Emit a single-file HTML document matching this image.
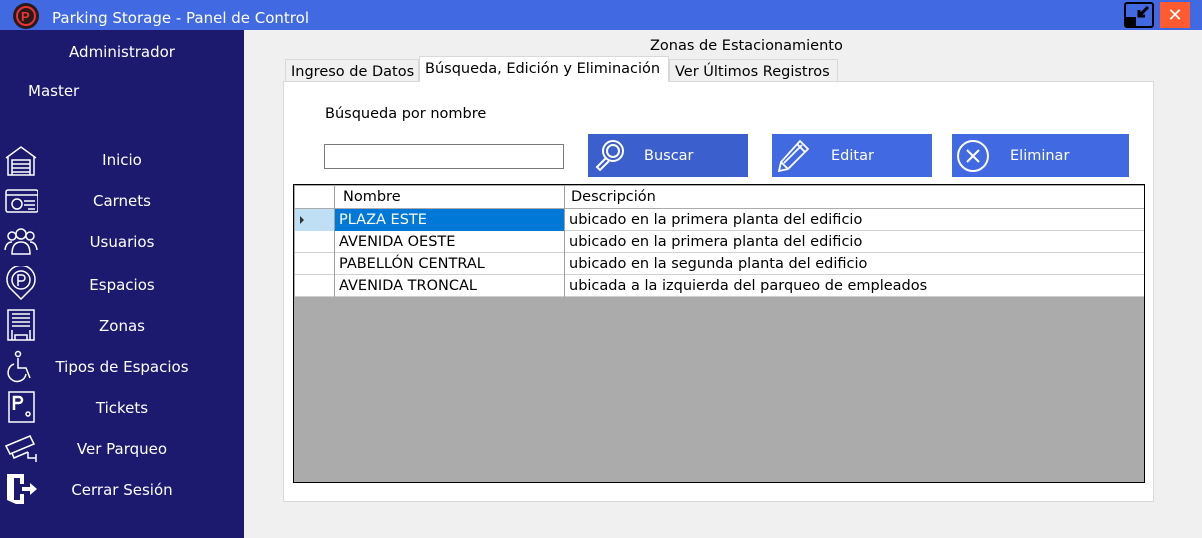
<!DOCTYPE html>
<html><head><meta charset="utf-8"><style>
*{margin:0;padding:0;box-sizing:border-box}
body{width:1202px;height:538px;overflow:hidden;background:#f0f0f0;font-family:"Liberation Sans","DejaVu Sans",sans-serif;position:relative}
.abs{position:absolute;white-space:nowrap}
#title{left:0;top:0;width:1202px;height:30px;background:#4169e1}
#side{left:0;top:30px;width:244px;height:508px;background:#1b1a6e}
.nav{position:absolute;left:0;width:244px;text-align:center;color:#fff;font-size:15px;font-family:"DejaVu Sans",sans-serif}
.ico{position:absolute;left:4px;width:34px;height:34px}
.tab{position:absolute;white-space:nowrap;height:24px;border:1px solid #d9d9d9;background:#f0f0f0;font-family:"DejaVu Sans",sans-serif;font-size:14.5px;padding:4px 0 0 5px;color:#000}
.btn{position:absolute;top:134px;height:43px;background:#4169e1;color:#fff;font-family:"DejaVu Sans",sans-serif;font-size:14.5px}
.btn span{position:absolute;top:14px}
.row{position:absolute;left:295px;width:849px;height:22px;background:#fff;border-bottom:1px solid #d0d0d0;font-family:"DejaVu Sans",sans-serif;font-size:14.5px;white-space:nowrap}
.row div{position:absolute;top:3px}
</style></head><body>
<div id="title" class="abs">
 <svg class="abs" style="left:12px;top:2px" width="28" height="28" viewBox="0 0 28 28"><circle cx="14" cy="14" r="13" fill="#2a1a1a"/><circle cx="14" cy="14" r="9" fill="none" stroke="#e33" stroke-width="2"/><text x="9" y="19" fill="#e33" font-size="13" font-family="Liberation Sans" font-weight="bold">P</text></svg>
 <div class="abs" style="left:52px;top:9px;color:#fff;font-size:15px;font-family:'DejaVu Sans',sans-serif">Parking Storage - Panel de Control</div>
 <div class="abs" style="left:1124px;top:2px;width:30px;height:26px;border:2px solid #000;border-radius:3px;background:#4169e1"><div class="abs" style="left:0;bottom:0;width:10px;height:9px;background:#000"></div><svg class="abs" style="left:10px;top:2px" width="14" height="14"><path d="M12 1 L4 9 M3 4 V10 H9" stroke="#000" stroke-width="3" fill="none"/></svg></div>
 <div class="abs" style="left:1160px;top:2px;width:30px;height:26px;background:#ff5a30;color:#fff;font-size:18px;font-weight:bold;text-align:center;line-height:26px">✕</div>
</div>
<div id="side" class="abs"></div>
<div class="nav" style="top:43px">Administrador</div>
<div class="nav" style="top:82px;left:28px;width:auto">Master</div>
<svg class="ico" style="top:144px" viewBox="0 0 34 34" fill="none" stroke="#fff" stroke-width="1.5"><path d="M2 14 L17 3 L32 14 M4 13 V31 H30 V13 M8 16 H26 V31 H8Z M8 20H26 M8 24H26 M8 28H26"/></svg>
<div class="nav" style="top:151px">Inicio</div>
<svg class="ico" style="top:186px" viewBox="0 0 34 34" fill="none" stroke="#fff" stroke-width="1.5"><rect x="2" y="4" width="32" height="22" rx="2"/><path d="M2 9H34"/><circle cx="13" cy="18" r="5"/><path d="M20 15H31 M20 19H31 M24 23H31"/></svg>
<div class="nav" style="top:192px">Carnets</div>
<svg class="ico" style="top:226px" viewBox="0 0 34 34" fill="none" stroke="#fff" stroke-width="1.5"><circle cx="8" cy="10" r="4"/><circle cx="26" cy="10" r="4"/><circle cx="17" cy="8" r="5"/><path d="M1 24 Q2 16 8 16 M33 24 Q32 16 26 16 M8 28 Q8 16 17 16 Q26 16 26 28Z"/></svg>
<div class="nav" style="top:233px">Usuarios</div>
<svg class="ico" style="top:266px" viewBox="0 0 34 34" fill="none" stroke="#fff" stroke-width="1.5"><path d="M17 33 L6 22 A14 14 0 1 1 28 22Z"/><circle cx="17" cy="14" r="9"/><path d="M14 20V9H18A3 3 0 0 1 18 15H14"/></svg>
<div class="nav" style="top:276px">Espacios</div>
<svg class="ico" style="top:308px" viewBox="0 0 34 34" fill="none" stroke="#fff" stroke-width="1.5"><rect x="4" y="2" width="26" height="30"/><path d="M8 6H26 M8 10H26 M8 14H26 M8 18H26 M8 22V32 M26 22V32 M11 32V27H23V32"/></svg>
<div class="nav" style="top:317px">Zonas</div>
<svg class="ico" style="top:350px" viewBox="0 0 34 34" fill="none" stroke="#fff" stroke-width="1.5"><circle cx="14" cy="4" r="2.5"/><path d="M14 8V18H22L26 28 M10 14 A9 9 0 1 0 22 24"/></svg>
<div class="nav" style="top:358px">Tipos de Espacios</div>
<svg class="ico" style="top:390px" viewBox="0 0 34 34" fill="none" stroke="#fff" stroke-width="1.5"><path d="M5 2 H30 V32 H5Z"/><path d="M10 20V7H15A3 3 0 0 1 15 13H10" stroke-width="2.5"/><circle cx="24" cy="24" r="2"/></svg>
<div class="nav" style="top:399px">Tickets</div>
<svg class="ico" style="top:432px" viewBox="0 0 34 34" fill="none" stroke="#fff" stroke-width="1.5"><path d="M2 14 L26 4 L30 12 L6 22Z M8 21 L10 26 L24 20 M24 20 V26 H32 M32 22V30"/></svg>
<div class="nav" style="top:440px">Ver Parqueo</div>
<svg class="ico" style="top:472px" viewBox="0 0 34 34" fill="#fff"><path d="M3 2 H20 V12 H16 V6 H10 V28 H16 V22 H20 V32 H12 L3 28Z M18 15 H26 V11 L33 17 L26 23 V19 H18Z"/></svg>
<div class="nav" style="top:481px">Cerrar Sesión</div>

<div class="abs" style="left:650px;top:38px;font-size:14.5px;font-family:'DejaVu Sans',sans-serif">Zonas de Estacionamiento</div>
<div class="abs" style="left:283px;top:81px;width:871px;height:421px;background:#fff;border:1px solid #d9d9d9"></div>
<div class="tab" style="left:285px;top:59px;width:134px;height:23px;padding-top:4px">Ingreso de Datos</div>
<div class="tab" style="left:419px;top:56px;width:250px;height:26px;background:#fff;border-bottom:none;padding-top:4px">Búsqueda, Edición y Eliminación</div>
<div class="tab" style="left:669px;top:59px;width:169px;height:23px;padding-top:4px">Ver Últimos Registros</div>
<div class="abs" style="left:325px;top:106px;font-size:14.5px;font-family:'DejaVu Sans',sans-serif">Búsqueda por nombre</div>
<div class="abs" style="left:324px;top:144px;width:240px;height:25px;border:1px solid #7a7a7a;background:#fff"></div>
<div class="btn" style="left:588px;width:160px;background:#3b5fcd">
 <svg class="abs" style="left:4px;top:3px" width="36" height="36" viewBox="0 0 36 36" fill="none" stroke="#fff" stroke-width="2"><circle cx="21" cy="14" r="10"/><circle cx="21" cy="14" r="6"/><path d="M14 21 L5 30 L8 33 L17 24"/></svg>
 <span style="left:56px">Buscar</span></div>
<div class="btn" style="left:772px;width:160px">
 <svg class="abs" style="left:4px;top:5px" width="34" height="34" viewBox="0 0 34 34" fill="none" stroke="#fff" stroke-width="1.8"><path d="M24 2 L32 10 L12 30 L3 32 L5 23Z M21 5 L29 13 M5 23 L12 30 M8 24 L26 6"/></svg>
 <span style="left:59px">Editar</span></div>
<div class="btn" style="left:952px;width:177px">
 <svg class="abs" style="left:4px;top:5px" width="34" height="34" viewBox="0 0 34 34" fill="none" stroke="#fff" stroke-width="2"><circle cx="17" cy="17" r="15"/><path d="M11 11 L23 23 M23 11 L11 23"/></svg>
 <span style="left:58px">Eliminar</span></div>

<div class="abs" style="left:293px;top:184px;width:852px;height:299px;background:#ababab;border:1px solid #000"></div>
<div class="row" style="top:186px;height:23px;border-bottom:1px solid #ababab"><div style="left:48px">Nombre</div><div style="left:276px">Descripción</div></div>
<div class="row" style="top:209px"><div style="left:274px">ubicado en la primera planta del edificio</div></div>
<div class="abs" style="left:334px;top:209px;width:230px;height:22px;background:#0078d7"></div>
<div class="abs" style="left:295px;top:209px;width:39px;height:22px;background:#bfdff5"></div>
<div class="abs" style="left:300px;top:216px;width:0;height:0;border-left:4px solid #333;border-top:4px solid transparent;border-bottom:4px solid transparent"></div>
<div class="abs" style="left:339px;top:212px;color:#fff;font-size:14.5px;font-family:'DejaVu Sans',sans-serif">PLAZA ESTE</div>
<div class="row" style="top:231px"><div style="left:44px">AVENIDA OESTE</div><div style="left:274px">ubicado en la primera planta del edificio</div></div>
<div class="row" style="top:253px"><div style="left:44px">PABELLÓN CENTRAL</div><div style="left:274px">ubicado en la segunda planta del edificio</div></div>
<div class="row" style="top:275px"><div style="left:44px">AVENIDA TRONCAL</div><div style="left:274px">ubicada a la izquierda del parqueo de empleados</div></div>
<div class="abs" style="left:334px;top:186px;width:1px;height:111px;background:#a0a0a0"></div>
<div class="abs" style="left:564px;top:186px;width:1px;height:111px;background:#a0a0a0"></div>
</body></html>
